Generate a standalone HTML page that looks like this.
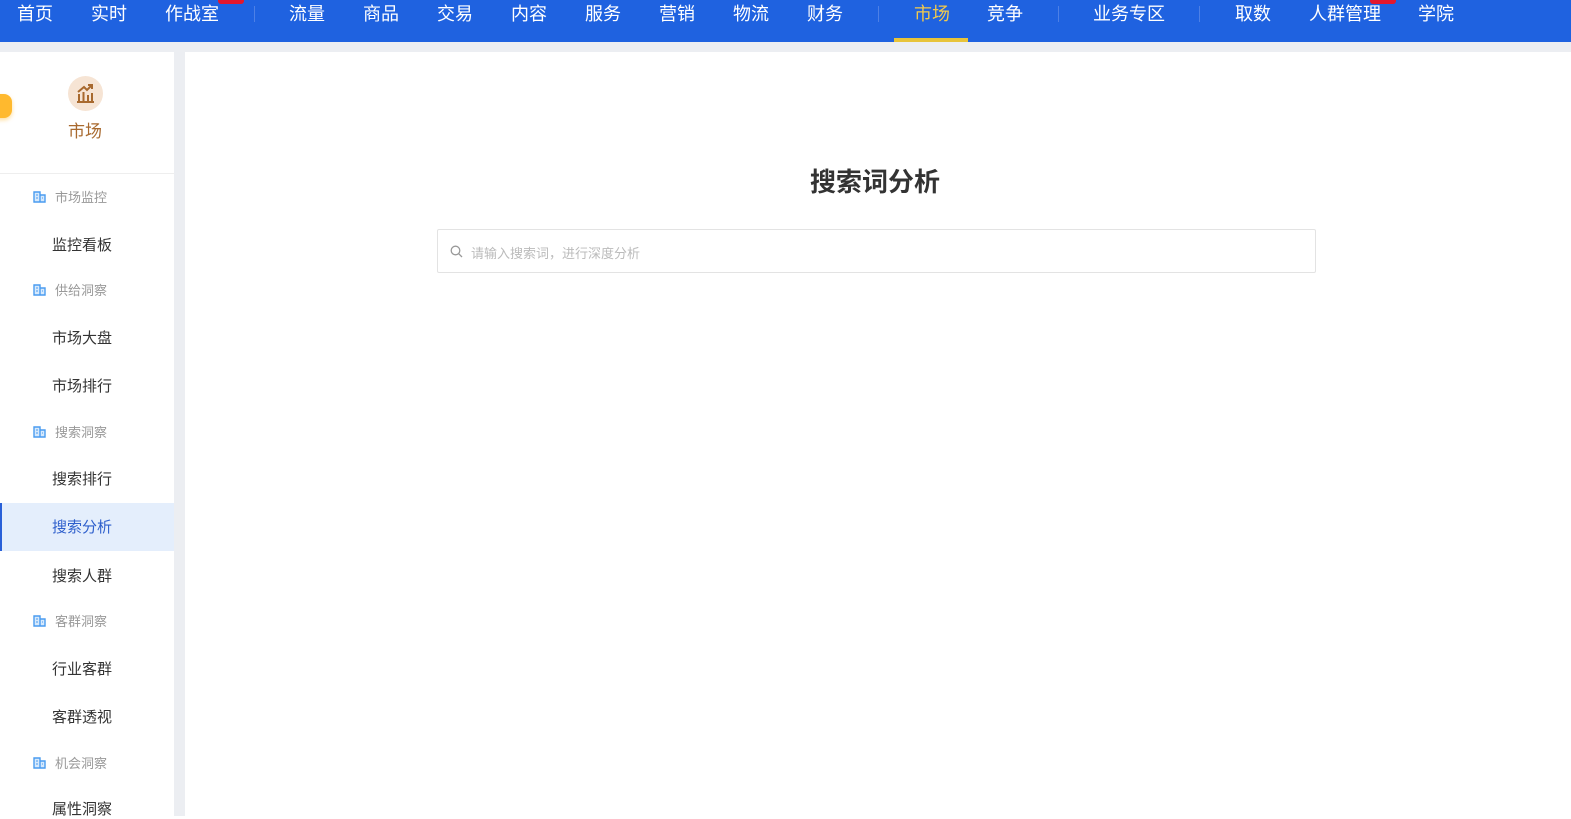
<!DOCTYPE html>
<html><head><meta charset="utf-8"><style>
*{margin:0;padding:0;box-sizing:border-box}
body{width:1571px;height:816px;overflow:hidden;background:#fff;font-family:"Liberation Sans","Noto Sans CJK SC",sans-serif;position:relative}
.nav{position:absolute;left:0;top:0;width:1571px;height:42px;background:#1f62e0}
.nav span{position:absolute;top:2px;font-size:18px;color:#fff;line-height:24px;white-space:nowrap}
.div{position:absolute;top:6px;width:1px;height:16px;background:#4d80e6}
.strip{position:absolute;left:0;top:42px;width:1571px;height:10px;background:#eceef2}
.vbar{position:absolute;left:174px;top:52px;width:11px;height:764px;background:#eceef2}
.side{position:absolute;left:0;top:52px;width:174px;height:764px;background:#fff}
.g{position:absolute;left:55px;font-size:13px;color:#999;line-height:16px}
.ic{position:absolute;left:33px;width:13px;height:12px}
.it{position:absolute;left:52px;font-size:15px;color:#333;line-height:18px}
.badge{position:absolute;top:-4px;height:8px;background:#e3172d;border-radius:3px}
</style></head><body>
<div class="nav">
<span style="left:17px">首页</span><span style="left:91px">实时</span><span style="left:165px">作战室</span>
<div class="badge" style="left:218px;width:26px"></div>
<div class="div" style="left:254px"></div>
<span style="left:289px">流量</span><span style="left:363px">商品</span><span style="left:437px">交易</span><span style="left:511px">内容</span><span style="left:585px">服务</span><span style="left:659px">营销</span><span style="left:733px">物流</span><span style="left:807px">财务</span>
<div class="div" style="left:878px"></div>
<span style="left:914px;color:#f2c94c">市场</span>
<div style="position:absolute;left:894px;top:38px;width:74px;height:4px;background:#e8c43a"></div>
<span style="left:987px">竞争</span>
<div class="div" style="left:1058px"></div>
<span style="left:1093px">业务专区</span>
<div class="div" style="left:1199px"></div>
<span style="left:1235px">取数</span><span style="left:1309px">人群管理</span>
<div class="badge" style="left:1370px;width:26px"></div>
<span style="left:1418px">学院</span>
</div>
<div class="strip"></div>
<div class="side">
<div style="position:absolute;left:-14px;top:42px;width:26px;height:24px;border-radius:8px;background:#ffb92e;box-shadow:0 2px 4px rgba(255,170,0,.4)"></div>
<div style="position:absolute;left:68px;top:24px;width:35px;height:35px;border-radius:50%;background:#f6e4d4"></div>
<svg style="position:absolute;left:75px;top:31px" width="21" height="21" viewBox="0 0 21 21"><g fill="none" stroke="#a8692e" stroke-width="2"><path d="M2 19H19"/><path d="M4 19V11M8.5 19V9M13 19V12M17 19V10"/><path d="M3 9L9 4L12 7L17 2"/><path d="M13 2H17V6"/></g></svg>
<div style="position:absolute;left:68px;top:65px;font-size:17px;color:#a8692e">市场</div>
<div style="position:absolute;left:0;top:121px;width:174px;height:1px;background:#eee"></div>
<svg class="ic" style="top:139px" viewBox="0 0 13 12"><path d="M1 1H7V11H1Z M7 4H12V11H7Z" fill="#d6e9fc" stroke="#4a9cf0" stroke-width="1.4"/><path d="M3 4H5M3 7H5M9 7H10" stroke="#4a9cf0"/></svg><div class="g" style="top:138px">市场监控</div>
<div class="it" style="top:185px">监控看板</div>
<svg class="ic" style="top:232px" viewBox="0 0 13 12"><path d="M1 1H7V11H1Z M7 4H12V11H7Z" fill="#d6e9fc" stroke="#4a9cf0" stroke-width="1.4"/><path d="M3 4H5M3 7H5M9 7H10" stroke="#4a9cf0"/></svg><div class="g" style="top:231px">供给洞察</div>
<div class="it" style="top:278px">市场大盘</div>
<div class="it" style="top:326px">市场排行</div>
<svg class="ic" style="top:374px" viewBox="0 0 13 12"><path d="M1 1H7V11H1Z M7 4H12V11H7Z" fill="#d6e9fc" stroke="#4a9cf0" stroke-width="1.4"/><path d="M3 4H5M3 7H5M9 7H10" stroke="#4a9cf0"/></svg><div class="g" style="top:373px">搜索洞察</div>
<div class="it" style="top:419px">搜索排行</div>
<div style="position:absolute;left:0;top:451px;width:174px;height:48px;background:#e4eefc;border-left:2px solid #2960d8"></div>
<div class="it" style="top:467px;color:#2e5fcc">搜索分析</div>
<div class="it" style="top:516px">搜索人群</div>
<svg class="ic" style="top:563px" viewBox="0 0 13 12"><path d="M1 1H7V11H1Z M7 4H12V11H7Z" fill="#d6e9fc" stroke="#4a9cf0" stroke-width="1.4"/><path d="M3 4H5M3 7H5M9 7H10" stroke="#4a9cf0"/></svg><div class="g" style="top:562px">客群洞察</div>
<div class="it" style="top:609px">行业客群</div>
<div class="it" style="top:657px">客群透视</div>
<svg class="ic" style="top:705px" viewBox="0 0 13 12"><path d="M1 1H7V11H1Z M7 4H12V11H7Z" fill="#d6e9fc" stroke="#4a9cf0" stroke-width="1.4"/><path d="M3 4H5M3 7H5M9 7H10" stroke="#4a9cf0"/></svg><div class="g" style="top:704px">机会洞察</div>
<div class="it" style="top:749px">属性洞察</div>
</div>
<div class="vbar"></div>
<div style="position:absolute;left:810px;top:165px;font-size:26px;font-weight:bold;color:#333;line-height:34px">搜索词分析</div>
<div style="position:absolute;left:437px;top:229px;width:879px;height:44px;border:1px solid #e3e3e3;border-radius:2px">
<svg style="position:absolute;left:12px;top:15px" width="13" height="13" viewBox="0 0 13 13"><circle cx="5.5" cy="5.5" r="4.3" fill="none" stroke="#999" stroke-width="1.3"/><path d="M8.6 8.6L12 12" stroke="#999" stroke-width="1.3"/></svg>
<div style="position:absolute;left:33px;top:13px;font-size:13px;color:#bbb">请输入搜索词，进行深度分析</div>
</div>
</body></html>
